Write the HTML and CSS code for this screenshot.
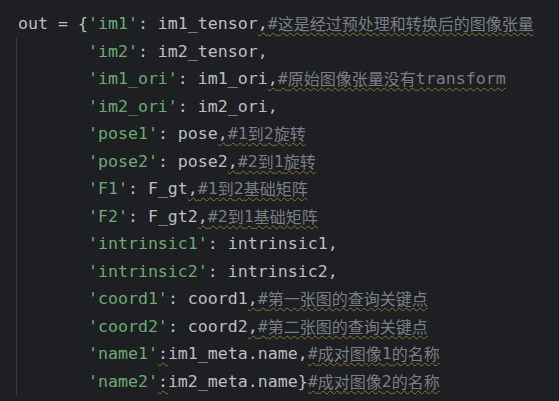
FILE: index.html
```html
<!DOCTYPE html>
<html>
<head>
<meta charset="utf-8">
<link rel="stylesheet" href="styles.css">
</head>
<body>
<div class="editor">
  <div class="line">out = {<span class="s">'im1'</span>: im1_tensor<span class="w">,<span class="c">#<span class="cjk">这是经过预处理和转换后的图像张量</span></span></span></div>
  <div class="block">
    <div class="line">       <span class="s">'im2'</span>: im2_tensor,</div>
    <div class="line">       <span class="s">'im1_ori'</span>: im1_ori<span class="w">,<span class="c">#<span class="cjk">原始图像张量没有</span>transform</span></span></div>
    <div class="line">       <span class="s">'im2_ori'</span>: im2_ori,</div>
    <div class="line">       <span class="s">'pose1'</span>: pose<span class="w">,<span class="c">#1<span class="cjk">到</span>2<span class="cjk">旋转</span></span></span></div>
    <div class="line">       <span class="s">'pose2'</span>: pose2<span class="w">,<span class="c">#2<span class="cjk">到</span>1<span class="cjk">旋转</span></span></span></div>
    <div class="line">       <span class="s">'F1'</span>: F_gt<span class="w">,<span class="c">#1<span class="cjk">到</span>2<span class="cjk">基础矩阵</span></span></span></div>
    <div class="line">       <span class="s">'F2'</span>: F_gt2<span class="w">,<span class="c">#2<span class="cjk">到</span>1<span class="cjk">基础矩阵</span></span></span></div>
    <div class="line">       <span class="s">'intrinsic1'</span>: intrinsic1,</div>
    <div class="line">       <span class="s">'intrinsic2'</span>: intrinsic2,</div>
    <div class="line">       <span class="s">'coord1'</span>: coord1<span class="w">,<span class="c">#<span class="cjk">第一张图的查询关键点</span></span></span></div>
    <div class="line">       <span class="s">'coord2'</span>: coord2<span class="w">,<span class="c">#<span class="cjk">第二张图的查询关键点</span></span></span></div>
    <div class="line">       <span class="s">'name1'</span><span class="w">:</span>im1_meta.name,<span class="w c">#<span class="cjk">成对图像</span>1<span class="cjk">的名称</span></span></div>
    <div class="line">       <span class="s">'name2'</span><span class="w">:</span>im2_meta.name}<span class="w c">#<span class="cjk">成对图像</span>2<span class="cjk">的名称</span></span></div>
  </div>
</div>
</body>
</html>
```

FILE: styles.css
```css
html, body {
  margin: 0;
  padding: 0;
  background: #1e1f22;
}

.editor {
  padding: 10px 0 0 16px;
  font-family: "DejaVu Sans Mono", "Noto Sans CJK SC", monospace;
  font-size: 16.6px;
  color: #bcbec4;
}

.line {
  height: 27.5px;
  line-height: 27.5px;
  white-space: pre;
  padding-left: 2px;
}

.block {
  border-left: 1px solid #393b40;
}

.block .line {
  padding-left: 1px;
}

.s {
  color: #6aab73;
}

.c {
  color: #7a7e85;
}

.cjk {
  font-family: "Noto Sans CJK SC", sans-serif;
  font-size: 16px;
  line-height: 16px;
  vertical-align: -1px;
}

.w {
  text-decoration-line: underline;
  text-decoration-style: wavy;
  text-decoration-color: #8a7436;
  text-decoration-thickness: 1px;
  text-underline-offset: 3px;
}
```
